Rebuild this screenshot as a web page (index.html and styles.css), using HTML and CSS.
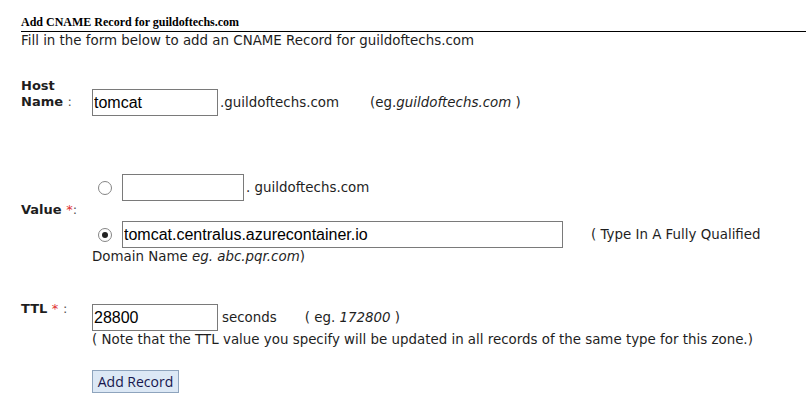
FILE: index.html
```html
<!DOCTYPE html>
<html>
<head>
<meta charset="utf-8">
<link rel="stylesheet" href="styles.css">
</head>
<body>
<div class="page">
  <div class="title">Add CNAME Record for guildoftechs.com</div>
  <div class="intro">Fill in the form below to add an CNAME Record for guildoftechs.com</div>

  <div class="row host">
    <div class="label">Host<br>Name <span class="colon">:</span></div>
    <div class="field line">
      <input class="txt short" type="text" value="tomcat">
      <span class="suffix">.guildoftechs.com</span>
      <span class="hint">(eg.<i>guildoftechs.com</i> )</span>
    </div>
  </div>

  <div class="row value">
    <div class="label vlabel">Value <span class="req">*</span><span class="colon">:</span></div>
    <div class="field">
      <div class="line opt">
        <span class="radio"></span>
        <input class="txt sub" type="text" value="">
        <span class="suffix2">. guildoftechs.com</span>
      </div>
      <div class="line opt opt2">
        <span class="radio on"></span>
        <input class="txt long" type="text" value="tomcat.centralus.azurecontainer.io">
        <span class="fq">( Type In A Fully Qualified</span>
      </div>
      <div class="wrap">Domain Name <i>eg. abc.pqr.com</i>)</div>
    </div>
  </div>

  <div class="row ttl">
    <div class="label tlabel">TTL <span class="req">*</span> <span class="colon">:</span></div>
    <div class="field tfield">
      <div class="line">
        <input class="txt short" type="text" value="28800">
        <span class="secs">seconds</span>
        <span class="eg">( eg. <i>172800</i> )</span>
      </div>
      <div class="note">( Note that the TTL value you specify will be updated in all records of the same type for this zone.)</div>
      <button class="btn" type="button">Add Record</button>
    </div>
  </div>
</div>
</body>
</html>
```

FILE: styles.css
```css
html, body {
  margin: 0;
  padding: 0;
  background: #ffffff;
}

.page {
  padding: 14px 0 0 21px;
  font-family: "DejaVu Sans", Verdana, sans-serif;
  font-size: 13.4px;
  color: #1e1e1e;
}

.title {
  font-family: "Liberation Serif", "Times New Roman", serif;
  font-weight: bold;
  font-size: 12px;
  line-height: 16px;
  color: #000;
  border-bottom: 1px solid #000;
  padding-bottom: 1px;
}

.intro {
  line-height: 15px;
  margin-top: 1px;
}

.row {
  display: grid;
  grid-template-columns: 71px 1fr;
}

.label {
  font-weight: bold;
  line-height: 16px;
  font-size: 13px;
}

.colon {
  font-weight: normal;
  color: #555;
}

.req {
  color: #e03030;
  font-weight: normal;
}

.host {
  margin-top: 30px;
}

.line {
  display: flex;
  align-items: center;
}

.host .field {
  margin-top: 11px;
}

.txt {
  box-sizing: border-box;
  height: 27px;
  border: 1px solid #7a7a7a;
  font-family: "Liberation Sans", Arial, sans-serif;
  font-size: 16px;
  color: #000;
  padding: 0 1px;
  margin: 0;
  background: #fff;
}

.short { width: 126px; }
.sub { width: 122px; }
.long { width: 441px; }

.suffix { margin-left: 2px; }
.hint { margin-left: 31px; }

.value {
  margin-top: 58px;
}

.vlabel {
  align-self: start;
  margin-top: 28px;
}

.radio {
  box-sizing: border-box;
  width: 14px;
  height: 14px;
  border: 1px solid #858585;
  border-radius: 50%;
  margin: 0 10px 0 6px;
  background: #fff;
  position: relative;
  flex: none;
}

.radio.on::after {
  content: "";
  position: absolute;
  left: 3px;
  top: 3px;
  width: 6px;
  height: 6px;
  border-radius: 50%;
  background: #222;
}

.suffix2 { margin-left: 2px; }

.opt2 { margin-top: 20px; }

.fq { margin-left: 28px; }

.wrap {
  line-height: 16px;
  margin-top: 1px;
}

.ttl {
  margin-top: 36px;
}

.tlabel {
  align-self: start;
}

.tfield {
  padding-top: 3px;
}

.secs { margin-left: 4px; }
.eg { margin-left: 28px; }

.note {
  line-height: 16px;
  margin-top: 1px;
}

.btn {
  margin-top: 22px;
  width: 87px;
  height: 23px;
  background: #dce8f5;
  border: 1px solid #8ea4bd;
  border-radius: 0;
  font-family: "Open Sans", Tahoma, sans-serif;
  font-size: 14px;
  color: #16164e;
  padding: 0;
  display: block;
}
```
